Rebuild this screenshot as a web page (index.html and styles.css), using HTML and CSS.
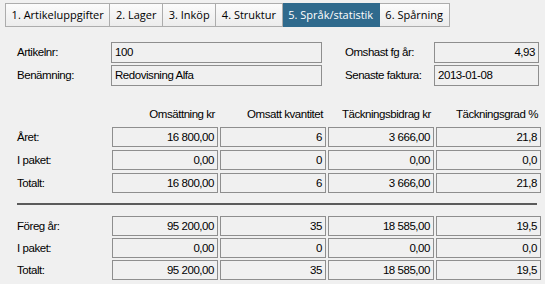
FILE: index.html
```html
<!DOCTYPE html>
<html lang="sv">
<head>
  <meta charset="UTF-8">
  <title>Språk/statistik</title>
  <link rel="stylesheet" href="styles.css">
</head>
<body>
  <div class="tabs">
    <div class="tab">1. Artikeluppgifter</div>
    <div class="tab">2. Lager</div>
    <div class="tab">3. Inköp</div>
    <div class="tab">4. Struktur</div>
    <div class="tab active">5. Språk/statistik</div>
    <div class="tab">6. Spårning</div>
  </div>

  <div class="info">
    <span class="lbl">Artikelnr:</span>
    <div class="box">100</div>
    <span class="lbl right-lbl">Omshast fg år:</span>
    <div class="box num">4,93</div>

    <span class="lbl">Benämning:</span>
    <div class="box">Redovisning Alfa</div>
    <span class="lbl right-lbl">Senaste faktura:</span>
    <div class="box">2013-01-08</div>
  </div>

  <div class="stats">
    <span></span>
    <span class="head">Omsättning kr</span>
    <span class="head">Omsatt kvantitet</span>
    <span class="head">Täckningsbidrag kr</span>
    <span class="head">Täckningsgrad %</span>

    <span class="lbl">Året:</span>
    <div class="box num">16 800,00</div>
    <div class="box num">6</div>
    <div class="box num">3 666,00</div>
    <div class="box num">21,8</div>

    <span class="lbl">I paket:</span>
    <div class="box num">0,00</div>
    <div class="box num">0</div>
    <div class="box num">0,00</div>
    <div class="box num">0,0</div>

    <span class="lbl">Totalt:</span>
    <div class="box num">16 800,00</div>
    <div class="box num">6</div>
    <div class="box num">3 666,00</div>
    <div class="box num">21,8</div>
  </div>

  <div class="separator"></div>

  <div class="stats prev">
    <span class="lbl">Föreg år:</span>
    <div class="box num">95 200,00</div>
    <div class="box num">35</div>
    <div class="box num">18 585,00</div>
    <div class="box num">19,5</div>

    <span class="lbl">I paket:</span>
    <div class="box num">0,00</div>
    <div class="box num">0</div>
    <div class="box num">0,00</div>
    <div class="box num">0,0</div>

    <span class="lbl">Totalt:</span>
    <div class="box num">95 200,00</div>
    <div class="box num">35</div>
    <div class="box num">18 585,00</div>
    <div class="box num">19,5</div>
  </div>
</body>
</html>
```
FILE: styles.css
```css
body {
  margin: 0;
  background-color: #f0f0f0;
  color: #000;
  font-family: 'Liberation Sans', Arial, sans-serif;
  font-size: 11.5px;
  letter-spacing: -0.45px;
}

.tabs {
  display: flex;
  margin: 3px 0 0 5px;
}

.tab {
  height: 22px;
  line-height: 22px;
  padding: 0 5.6px;
  border: 1px solid #acacac;
  border-left: none;
  background: linear-gradient(#fbfbfb, #ececec);
  font-family: 'Open Sans', sans-serif;
  font-size: 11px;
  letter-spacing: 0;
}

.tab:first-child {
  border-left: 1px solid #acacac;
}

.tab.active {
  background: #2f6a8d;
  border-color: #2f6a8d;
  color: #fff;
}

.info {
  display: grid;
  grid-template-columns: 94px 211px 112px 105px;
  grid-auto-rows: 21px;
  row-gap: 2px;
  margin: 15px 0 0 17px;
}

.lbl {
  line-height: 21px;
}

.right-lbl {
  padding-left: 23px;
}

.box {
  box-sizing: border-box;
  height: 100%;
  border: 1px solid #8e8e8e;
  background-color: #f0f0f0;
  padding: 0 3px;
  line-height: 18px;
  white-space: nowrap;
}

.num {
  text-align: right;
}

.stats {
  display: grid;
  grid-template-columns: 93px 106px 106px 106px 105px;
  grid-auto-rows: 20px;
  column-gap: 2px;
  row-gap: 3px;
  margin: 18px 0 0 17px;
}

.stats .lbl {
  line-height: 20px;
}

.head {
  text-align: right;
  line-height: 20px;
  padding-right: 3px;
}

.separator {
  height: 2px;
  width: 520px;
  margin: 10px 0 0 17px;
  background-color: #5a5a5a;
}

.stats.prev {
  row-gap: 2px;
  margin-top: 11px;
}
```
